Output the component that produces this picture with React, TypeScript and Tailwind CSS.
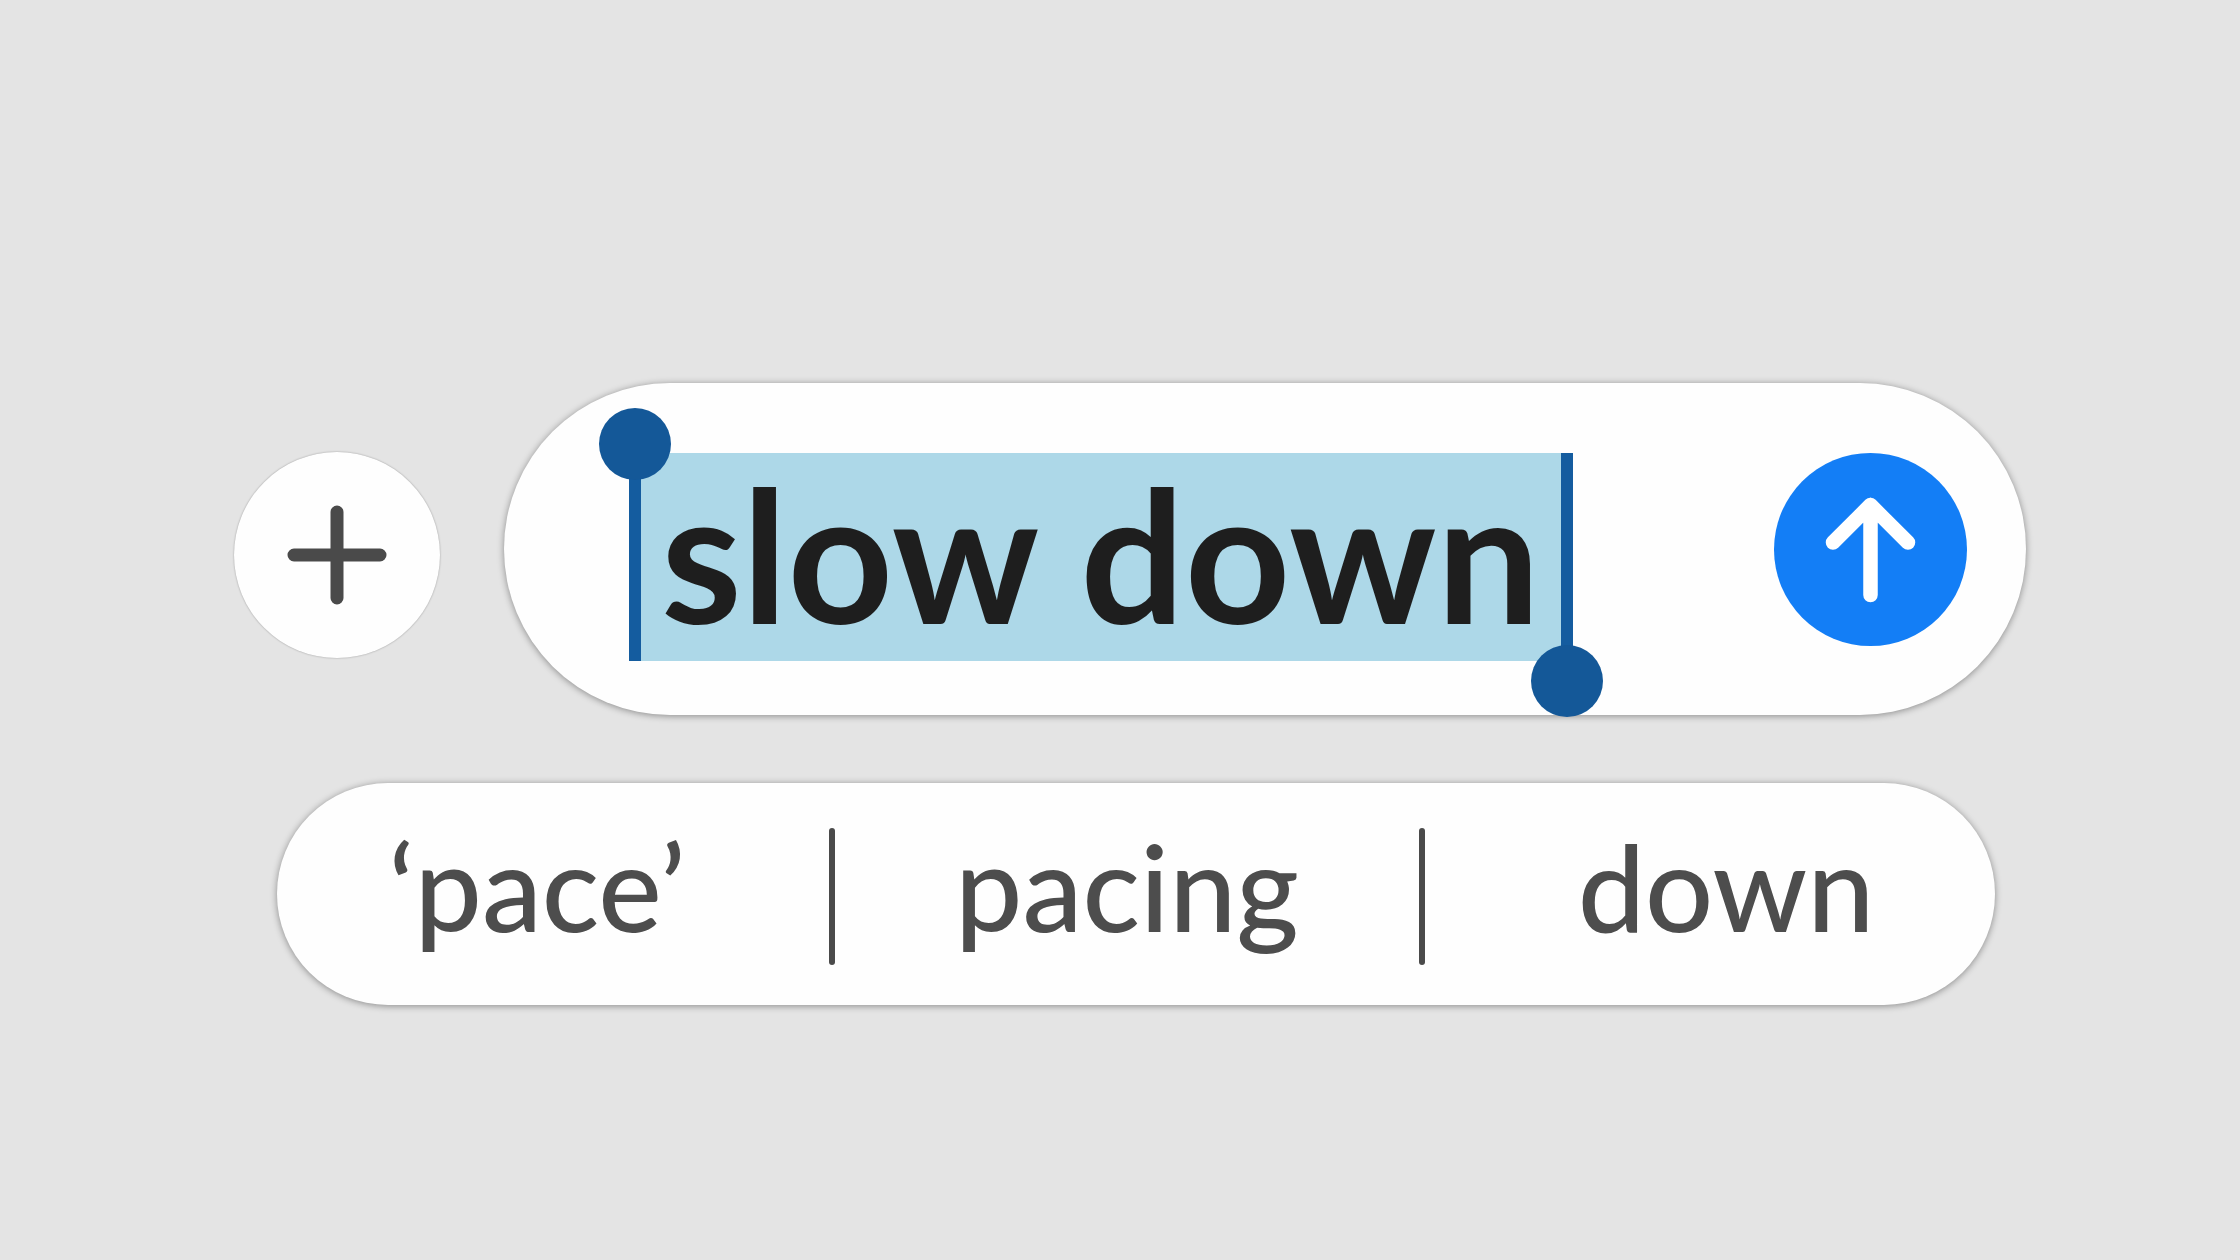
import React, { useState } from 'react';

const SUGGESTIONS = ['‘pace’', 'pacing', 'down'];

const PlusIcon: React.FC = () => (
  <svg viewBox="0 0 100 100" className="size-[100px]" fill="none" stroke="currentColor" strokeWidth="13" strokeLinecap="round" aria-hidden="true">
    <path d="M50 7v86M7 50h86" />
  </svg>
);

const SendIcon: React.FC = () => (
  <svg viewBox="0 0 193 193" className="size-full" fill="none" stroke="currentColor" strokeWidth="14.5" strokeLinecap="round" strokeLinejoin="round" aria-hidden="true">
    <path d="M96.500 142V52M59 89.500L96.500 52L134 89.500" />
  </svg>
);

const SelectedField: React.FC<{ value: string; onChange: (value: string) => void }> = ({ value, onChange }) => (
  <div className="relative h-52 min-w-0 max-w-[944px] flex-1 border-x-12 border-[#145c9f] bg-[#add8e8]">
    <input
      type="text"
      aria-label="Message"
      value={value}
      onChange={(e) => onChange(e.target.value)}
      className="h-full w-full pb-2.5 pl-5 text-[184px] leading-none font-bold text-[#1e1e1e] outline-none"
    />
    {/* Selection handles */}
    <span className="absolute -left-[42px] -top-[45px] size-[72px] rounded-full bg-[#145898]" />
    <span className="absolute -right-[42px] -bottom-14 size-[72px] rounded-full bg-[#145898]" />
  </div>
);

const SuggestionBar: React.FC<{ onPick: (word: string) => void }> = ({ onPick }) => (
  <div className="ml-[43px] mr-[31px] mt-[68px] grid h-[222px] grid-cols-[552fr_6px_584fr_6px_570fr] items-center rounded-full bg-[#fefefe] shadow-[0_1px_7px_rgba(0,0,0,0.4)]">
    {SUGGESTIONS.map((word, i) => (
      <React.Fragment key={word}>
        {i > 0 && <span className="mt-1 h-[137px] rounded-full bg-[#4a4a4a]" />}
        <button
          type="button"
          onClick={() => onPick(word)}
          className="h-full pb-4 text-[120px] leading-none font-medium text-[#4d4d4d] first:pr-8 last:pl-8"
        >
          {word}
        </button>
      </React.Fragment>
    ))}
  </div>
);

export default function App() {
  const [message, setMessage] = useState('slow down');

  return (
    <main className="min-h-screen bg-[#e4e4e4] pl-[234px] pr-[214px] pt-[383px] font-['Lato',sans-serif]">
      <div className="flex items-center gap-16">
        <button
          type="button"
          aria-label="Add attachment"
          className="mt-3 flex size-[206px] shrink-0 items-center justify-center rounded-full bg-[#fefefe] text-[#4a4a4a] shadow-[0_0_2px_rgba(0,0,0,0.35)]"
        >
          <PlusIcon />
        </button>
        <div className="flex min-w-0 flex-1 items-start justify-between rounded-full bg-[#fefefe] pb-[54px] pl-[125px] pr-[59px] pt-[70px] shadow-[0_1px_7px_rgba(0,0,0,0.4)]">
          <SelectedField value={message} onChange={setMessage} />
          <button type="button" aria-label="Send" className="size-[193px] shrink-0 rounded-full bg-[#137ef6] text-white">
            <SendIcon />
          </button>
        </div>
      </div>
      <SuggestionBar onPick={setMessage} />
    </main>
  );
}
